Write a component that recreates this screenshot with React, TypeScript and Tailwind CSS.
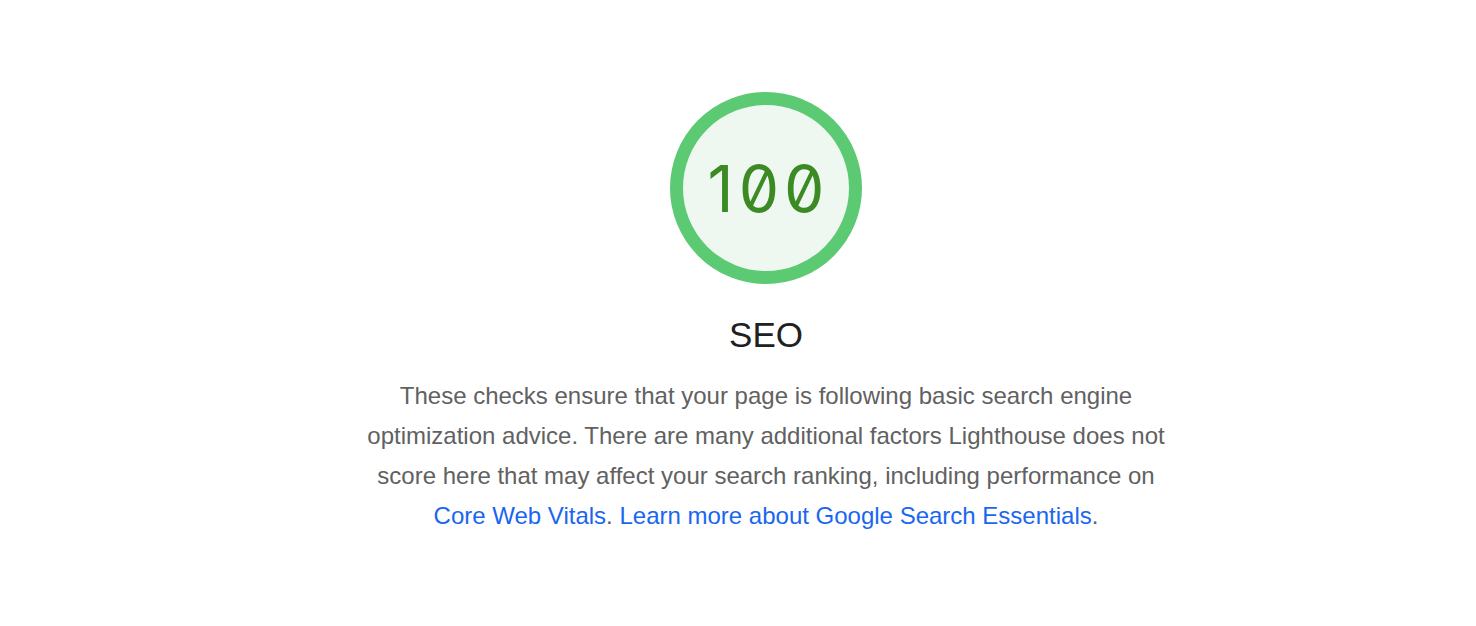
import React from "react";

const App = () => {
  return (
    <div className="min-h-[626px] bg-white pt-[92px] pl-[56px] flex flex-col items-center font-['Liberation_Sans',Arial,sans-serif]">
      {/* gauge */}
      <div className="w-[192px] h-[192px] rounded-full border-[13px] border-[#5cca73] bg-[#eef8f1] flex items-center justify-center">
        <span className="font-['Inter',sans-serif] [font-feature-settings:'zero'] text-[64px] leading-none tracking-[5px] pl-[5px] text-[#3b8a24] mt-[2px]">
          100
        </span>
      </div>
      <div className="mt-[31px] text-[35px] leading-[40px] text-[#212121]">SEO</div>
      <p className="mt-[21px] max-w-[800px] text-center text-[24px] leading-[40px] text-[#616161]">
        These checks ensure that your page is following basic search engine
        optimization advice. There are many additional factors Lighthouse does
        not score here that may affect your search ranking, including
        performance on{" "}
        <a href="#" className="text-[#1a66f0]">
          Core Web Vitals
        </a>
        .{" "}
        <a href="#" className="text-[#1a66f0]">
          Learn more about Google Search Essentials
        </a>
        .
      </p>
    </div>
  );
};

export default App;
